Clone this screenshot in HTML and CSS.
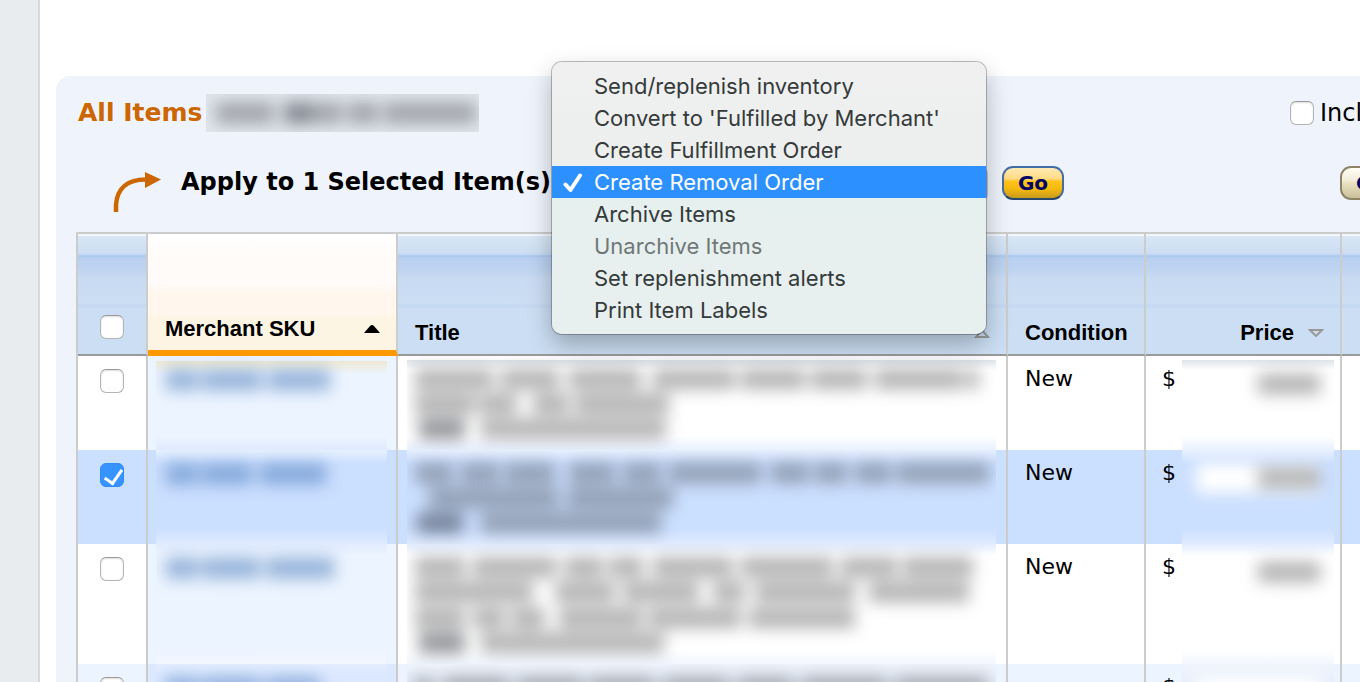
FILE: index.html
```html
<!DOCTYPE html>
<html lang="en">
<head>
<meta charset="utf-8">
<title>Manage Inventory</title>
<link rel="stylesheet" href="styles.css">
</head>
<body>
<div class="page">
  <aside class="rail"></aside>
  <main class="main">
    <section class="panel">
      <header class="bar">
        <h1 class="title">All Items</h1>
        <svg class="count" width="273" height="38" aria-hidden="true">
          <g class="smudge">
            <path class="ink" d="M10 19h58m38 0h30m6 0h30m6 0h92"/>
            <path class="ink bold" d="M78 19h28"/>
          </g>
        </svg>
        <label class="include"><input type="checkbox" class="check">Incl</label>
      </header>

      <div class="actions">
        <svg class="arrow" width="50" height="46" aria-hidden="true">
          <path d="M3 46V39C4 22 15 13 34 13.500" fill="none" stroke="#cc6600" stroke-width="4.500"/>
          <path d="M32 6l16 7.500L32 22z" fill="#cc6600"/>
        </svg>
        <label class="apply" for="action">Apply to 1 Selected Item(s)</label>
        <div class="picker">
          <select id="action" class="select"><option>Create Removal Order</option></select>
          <div class="menu" role="listbox" aria-label="Actions">
            <button class="option" role="option">Send/replenish inventory</button>
            <button class="option" role="option">Convert to 'Fulfilled by Merchant'</button>
            <button class="option" role="option">Create Fulfillment Order</button>
            <button class="option current" role="option" aria-selected="true">
              <svg class="tick" width="20" height="20" aria-hidden="true"><path d="M2.500 11.500L7.500 17L17 2.500" fill="none" stroke="#fff" stroke-width="4" stroke-linecap="round" stroke-linejoin="round"/></svg>Create Removal Order</button>
            <button class="option" role="option">Archive Items</button>
            <button class="option" role="option" disabled>Unarchive Items</button>
            <button class="option" role="option">Set replenishment alerts</button>
            <button class="option" role="option">Print Item Labels</button>
          </div>
        </div>
        <button class="pill gold">Go</button>
        <div class="edge"><button class="pill cream">Go</button></div>
      </div>

      <table class="grid">
        <colgroup><col class="c-pick"><col class="c-sku"><col><col class="c-cond"><col class="c-price"><col class="c-rest"></colgroup>
        <thead>
          <tr>
            <th class="pick"><input type="checkbox" class="check" aria-label="Select all"></th>
            <th class="sorted"><div class="head">Merchant SKU<svg width="16" height="8" aria-hidden="true"><path d="M0 8L6 1Q8-1 10 1L16 8z" fill="#000"/></svg></div></th>
            <th><div class="head">Title<svg width="16" height="10" aria-hidden="true"><path d="M2 9L8 2L14 9z" fill="none" stroke="#999" stroke-width="2"/></svg></div></th>
            <th><div class="head">Condition</div></th>
            <th><div class="head end">Price<svg width="16" height="8" aria-hidden="true"><path d="M2 1H14L8 7z" fill="#d5e0ee" stroke="#999" stroke-width="2"/></svg></div></th>
            <th></th>
          </tr>
        </thead>
        <tbody>
          <tr class="first">
            <td class="pick"><input type="checkbox" class="check" aria-label="Select item"></td>
            <td class="sku"><svg class="hidden-text" height="94" aria-hidden="true"><g class="smudge"><path class="link" d="M10 24h32m4 0h60m6 0h62"/></g></svg></td>
            <td class="name"><svg class="hidden-text" height="94" aria-hidden="true"><g class="smudge"><path class="ink" d="M8 23h78m8 0h58m10 0h72m12 0h82m6 0h64m6 0h56m8 0h88m4 0h12M8 48h60m4 0h38m16 0h36m6 0h94M74 73h185"/><path class="ink bold" d="M12 73h46"/></g></svg></td>
            <td>New</td>
            <td class="price"><div class="money">$<svg class="hidden-text" height="94" aria-hidden="true"><g class="smudge"><path class="ink" d="M76 28h62"/></g></svg></div></td>
            <td></td>
          </tr>
          <tr class="selected">
            <td class="pick"><input type="checkbox" class="check" checked aria-label="Select item"></td>
            <td class="sku"><svg class="hidden-text" height="94" aria-hidden="true"><g class="smudge"><path class="link" d="M10 24h32m4 0h50m8 0h66"/></g></svg></td>
            <td class="name"><svg class="hidden-text" height="94" aria-hidden="true"><g class="smudge"><path class="ink" d="M8 23h38m8 0h38m6 0h50m14 0h46m8 0h38m8 0h92m10 0h38m6 0h32m8 0h36m6 0h92M22 48h130m8 0h106M74 73h180"/><path class="ink bold" d="M10 73h46"/></g></svg></td>
            <td>New</td>
            <td class="price"><div class="money">$<svg class="hidden-text" height="94" aria-hidden="true"><g class="smudge"><path class="field" d="M14 28h124"/><path class="ink" d="M76 28h62"/></g></svg></div></td>
            <td></td>
          </tr>
          <tr>
            <td class="pick"><input type="checkbox" class="check" aria-label="Select item"></td>
            <td class="sku"><svg class="hidden-text" height="120" aria-hidden="true"><g class="smudge"><path class="link" d="M10 24h32m4 0h58m6 0h68"/></g></svg></td>
            <td class="name"><svg class="hidden-text" height="120" aria-hidden="true"><g class="smudge"><path class="ink" d="M8 23h50m8 0h84m8 0h38m6 0h34m10 0h80m8 0h92m8 0h56m6 0h70M8 48h118m22 0h60m8 0h76m14 0h32m10 0h100m14 0h100M8 74h50m8 0h32m6 0h34m14 0h84m6 0h92m8 0h106M74 99h183"/><path class="ink bold" d="M12 99h46"/></g></svg></td>
            <td>New</td>
            <td class="price"><div class="money">$<svg class="hidden-text" height="120" aria-hidden="true"><g class="smudge"><path class="ink" d="M76 28h62"/></g></svg></div></td>
            <td></td>
          </tr>
          <tr class="alt">
            <td class="pick"><input type="checkbox" class="check" aria-label="Select item"></td>
            <td class="sku"><svg class="hidden-text" height="40" aria-hidden="true"><g class="smudge"><path class="link" d="M10 24h32m4 0h58m6 0h54"/></g></svg></td>
            <td class="name"><svg class="hidden-text" height="40" aria-hidden="true"><g class="smudge"><path class="ink" d="M8 23h18m10 0h66m8 0h66m6 0h66m8 0h66m8 0h56m8 0h86m8 0h92"/></g></svg></td>
            <td></td>
            <td class="price"><div class="money">$<svg class="hidden-text" height="40" aria-hidden="true"><g class="smudge"><path class="field" d="M14 28h124"/></g></svg></div></td>
            <td></td>
          </tr>
        </tbody>
      </table>
    </section>
  </main>
</div>
</body>
</html>
```
FILE: styles.css
```css
* { box-sizing: border-box; }

body {
  margin: 0;
  height: 100vh;
  overflow: hidden;
  background: #fff;
  color: #000;
  font-family: Verdana, "DejaVu Sans", sans-serif;
  font-size: 22px;
  line-height: 26px;
}

button, select { font: inherit; }

.page { display: flex; min-height: 100vh; }

.rail {
  flex: none;
  width: 40px;
  background: #e8ecef;
  border-right: 2px solid #d7dade;
}

.main { flex: 1; min-width: 0; padding: 76px 0 0 16px; }

.panel {
  padding: 18px 0 0 20px;
  background: #eff4fc;
  border-top-left-radius: 14px;
}

/* heading bar */
.bar { display: flex; align-items: center; height: 38px; padding-left: 2px; }

.title { margin: 0; font-size: 25px; color: #cc6600; white-space: nowrap; }

.count { flex: none; margin-left: 4px; background: #e1e6ed; }

.include {
  display: flex;
  align-items: center;
  gap: 6px;
  width: 70px;
  margin-left: auto;
  font-size: 24px;
  white-space: nowrap;
}

.check {
  appearance: none;
  position: relative;
  flex: none;
  display: block;
  width: 24px;
  height: 24px;
  margin: 0;
  background: #fff;
  border: 1px solid #b4b4b4;
  border-top-color: #999;
  border-radius: 6px;
  box-shadow: inset 0 1px 2px #ddd;
}

.check:checked { background: #3693ff; border-color: #2f8bf8; box-shadow: none; }

.check:checked::after {
  content: "";
  position: absolute;
  left: 7px;
  top: 2px;
  width: 8px;
  height: 15px;
  border: solid #fff;
  border-width: 0 3px 3px 0;
  transform: rotate(35deg);
}

/* action row */
.actions { display: flex; align-items: flex-start; margin: 34px 0 20px; padding-left: 37px; }

.arrow { flex: none; margin-right: 18px; }

.apply { width: 371px; font-size: 24px; font-weight: bold; line-height: 32px; white-space: nowrap; }

.picker { position: relative; flex: none; width: 436px; }

.select {
  width: 100%;
  height: 36px;
  appearance: none;
  border: 2px solid #a9c9f2;
  border-radius: 8px;
  background: #a9c9f2;
}

.menu {
  position: absolute;
  z-index: 2;
  top: -104px;
  left: 0;
  width: 434px;
  padding: 8px 0;
  border-radius: 10px;
  background: linear-gradient(#f0f0f0, #ecefee 35%, #e6f0ee 50%, #e8f0ef);
  box-shadow: 0 0 0 1px rgba(0, 0, 0, .25), 0 10px 24px rgba(0, 0, 0, .28);
}

.option {
  position: relative;
  display: block;
  width: 100%;
  height: 32px;
  padding: 0 0 0 42px;
  border: 0;
  background: none;
  color: #353a3a;
  font-family: Inter, sans-serif;
  font-size: 22px;
  line-height: 32px;
  text-align: left;
  white-space: nowrap;
}

.option:disabled { color: #707877; }

.option.current { background: #2c90ff; color: #fff; }

.tick { position: absolute; left: 11px; top: 7px; }

.pill {
  flex: none;
  width: 62px;
  height: 34px;
  padding: 0;
  border: 2px solid;
  border-radius: 11px;
  color: #000066;
  font-size: 20px;
  font-weight: bold;
  line-height: 28px;
}

.gold {
  margin-left: 14px;
  border-color: #3f6ea8 #4a6f9c #27476b;
  background: linear-gradient(#ffe9b4, #ffdb85 35%, #ffc31c 45%, #f5b90f 70%, #c79a1c);
}

.cream {
  border-color: #8d8468;
  background: linear-gradient(#fffdf5, #f3eeda 40%, #e9e2c0 50%, #c9bf9b);
}

.edge { width: 20px; margin-left: auto; }

/* inventory table */
.grid {
  width: 100%;
  table-layout: fixed;
  border-collapse: separate;
  border-spacing: 0;
  border-top: 2px solid #ccc;
  border-left: 2px solid #ccc;
  background: #fff;
}

.c-pick { width: 70px; }
.c-sku { width: 250px; }
.c-cond { width: 138px; }
.c-price { width: 196px; }
.c-rest { width: 18px; }

th, td { padding: 0; border-right: 2px solid #ccc; text-align: left; }
th:last-child, td:last-child { border-right: 0; }

th {
  height: 122px;
  border-bottom: 2px solid #999;
  background: linear-gradient(#f2f7fd 0, #f2f7fd 2px, #d9e7f6 2px, #cbddf2 20px, #a9c7f0 22px, #b8d0f0 24px, #bdd3f0 34px, #c9dbf3 44px, #cbdef3 70px, #c3d8f2 71px, #cbdef3 76px);
  font-family: Helvetica, "Liberation Sans", Arial, sans-serif;
  vertical-align: bottom;
}

th.sorted {
  border-bottom: 6px solid #ff9900;
  background: linear-gradient(#fff, #fffcfa 16px, #fffbf8 50px, #fff6ee 58px, #fff6ee 80px, #fdf5e4 84px, #fdf4e3);
}

th.pick { padding-bottom: 15px; }

.head { display: flex; align-items: center; justify-content: space-between; padding: 0 16px 8px 17px; }
.head.end { justify-content: flex-end; gap: 14px; }

td { padding: 10px 0 0 17px; vertical-align: top; background: var(--row); }
tr { --row: #fff; --sku: #ecf4ff; }
tr.selected { --row: #cbdfff; --sku: #cbdfff; }
tr.alt { --row: #ebf4ff; --sku: #dbe8ff; }

td.pick { padding: 13px 0 0; }
.pick .check { margin: 0 auto; }

td.sku { padding: 0 9px 0 8px; background: var(--sku); }
td.name { padding: 0 10px 0 9px; }
td.price { padding: 0 6px 0 16px; }

.money { display: flex; gap: 6px; line-height: 46px; }

/* privacy smudges */
.hidden-text { display: block; width: 100%; min-width: 0; }
.money .hidden-text { flex: 1; }

.selected .hidden-text { background: linear-gradient(#e8f1ff, #cbdfff 14px, #cbdfff 78px, #e0ebff); }
.first .hidden-text { background: linear-gradient(transparent 4px, #dfe4ea 4px, transparent 14px, transparent 80px, #e8f1ff); }
.first .sku .hidden-text { background: linear-gradient(transparent 5px, #efe9d2 5px, #ecf4ff 18px, #ecf4ff 80px, #dfeaff); }
.selected + tr .hidden-text { background: linear-gradient(#e2ecff, transparent 12px, transparent 106px, #f2f7fe); }
.alt .hidden-text { background: linear-gradient(#eff5fd, #e9f0fb 14px); }
.alt .sku .hidden-text { background: linear-gradient(#e4eeff, #dbe8ff 12px); }

.smudge { filter: blur(8px); }
.ink, .link, .field { fill: none; stroke-width: 21px; stroke: rgba(40, 40, 40, .34); }
.bold { stroke: rgba(20, 25, 35, .45); }
.link { stroke: rgba(50, 105, 175, .46); }
.field { stroke: #fff; stroke-width: 30px; }
```
